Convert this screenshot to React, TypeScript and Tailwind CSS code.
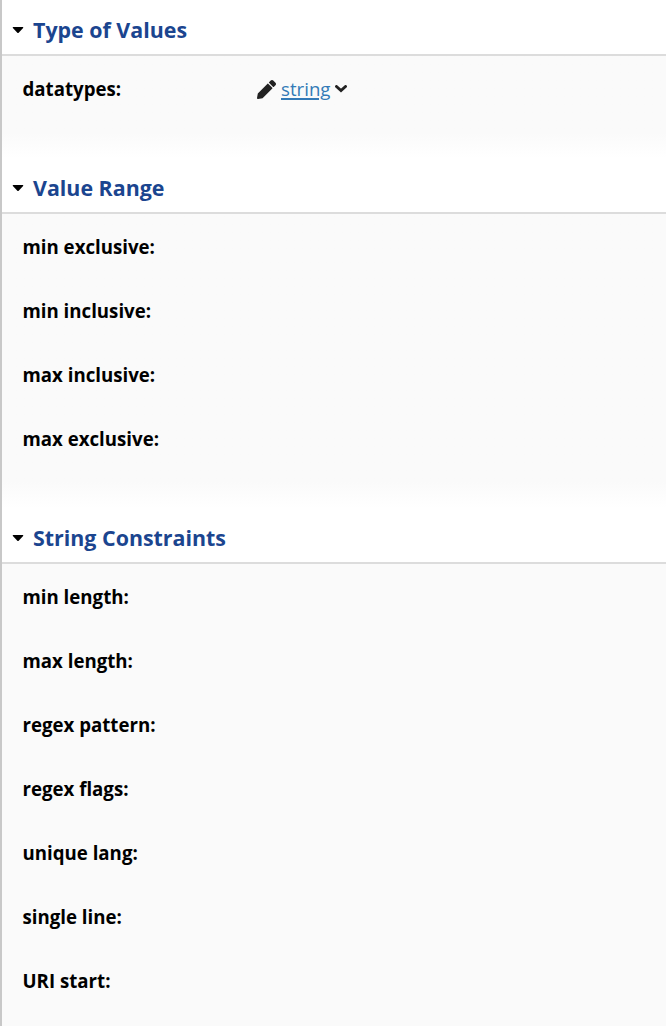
import React from "react";

type SectionProps = { title: string; children: React.ReactNode };

function Section({ title, children }: SectionProps) {
  return (
    <section>
      <h2 className="flex h-[56px] items-center border-b-2 border-[#dcdcdc] bg-white pl-[10px] pt-[6px] text-[21.4px] font-bold text-[#1b458f]">
        <svg className="mr-[9px] h-[7px] w-[12px]" viewBox="0 0 12 7" fill="#000">
          <path d="M1.2 0h9.6q1 .3.3 1.1L6.7 5.7q-.7.6-1.4 0L.9 1.1Q.2.3 1.2 0z" />
        </svg>
        <span className="leading-7">{title}</span>
      </h2>
      {children}
    </section>
  );
}

function Field({ label, children }: { label: string; children?: React.ReactNode }) {
  return (
    <div className="flex h-16 items-center pl-[20.5px]">
      <span className="w-[234.5px] text-[18.67px] leading-7 font-bold text-black">{label}:</span>
      {children}
    </div>
  );
}

const ranges = ["min exclusive", "min inclusive", "max inclusive", "max exclusive"];
const constraints = ["min length", "max length", "regex pattern", "regex flags", "unique lang", "single line", "URI start"];

export default function App() {
  return (
    <main className="h-[1026px] overflow-hidden border-l-2 border-[#c8c8c8] bg-white font-['Open_Sans',sans-serif]">
      <Section title="Type of Values">
        <div className="h-[102px] bg-linear-to-b from-[#fafafa] from-75% to-white pt-px">
          <Field label="datatypes">
            <svg className="h-[19px] w-[19px]" viewBox="0 0 512 512" fill="#222">
              <path d="M498 142l-46 46c-5 5-12 5-17 0L324 77c-5-5-5-12 0-17l46-46c19-19 49-19 68 0l60 60c19 19 19 49 0 68zM284 100L22 362 0 484c-3 16 12 31 28 28l122-22 262-262c5-5 5-12 0-17L301 100c-5-5-12-5-17 0z" />
            </svg>
            <a className="ml-[5px] text-[18.67px] leading-7 text-[#337ab7] underline decoration-2 underline-offset-[2px] [text-decoration-skip-ink:auto]">string</a>
            <svg className="ml-[5px] h-[8px] w-[12px]" viewBox="0 0 12 8" fill="none" stroke="#222" strokeWidth="2.9" strokeLinecap="round">
              <path d="M1.5 1.5L6 5.6l4.5-4.1" />
            </svg>
          </Field>
        </div>
      </Section>
      <Section title="Value Range">
        <div className="h-[294px] bg-linear-to-b from-[#fafafa] from-91% to-white pt-px">
          {ranges.map((r) => <Field key={r} label={r} />)}
        </div>
      </Section>
      <Section title="String Constraints">
        <div className="h-[462px] bg-[#fafafa] pt-px">
          {constraints.map((r) => <Field key={r} label={r} />)}
        </div>
      </Section>
    </main>
  );
}
